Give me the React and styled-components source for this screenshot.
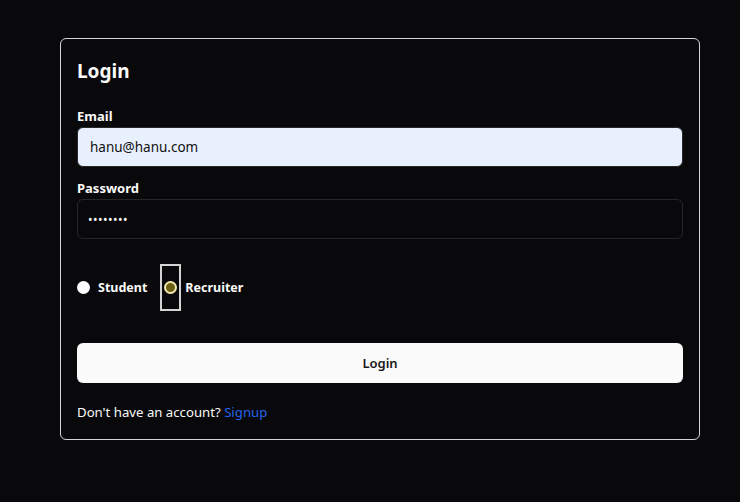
import React, { useState } from 'react';
import styled, { createGlobalStyle } from 'styled-components';

const GlobalStyle = createGlobalStyle`
  * { box-sizing: border-box; }
  html, body {
    margin: 0;
    background: #09090b;
    color: #fafafa;
    font-family: 'Noto Sans', 'Open Sans', sans-serif;
  }
`;

const Page = styled.div`
  min-height: 502px;
  padding: 38px 40px 0 60px;
`;

const Card = styled.form`
  width: 640px;
  border: 1px solid #d4d4d8;
  border-radius: 6px;
  padding: 16px 16px 0;
  display: flex;
  flex-direction: column;
  height: 402px;
`;

const Title = styled.h1`
  margin: 0;
  font-size: 19px;
  font-weight: 700;
  line-height: 32px;
`;

const Field = styled.div`
  display: flex;
  flex-direction: column;
  margin-top: ${(p) => p.$top}px;
`;

const Label = styled.label`
  font-size: 13px;
  font-weight: 700;
  line-height: 20px;
  margin-bottom: 1px;
`;

const Input = styled.input`
  height: 40px;
  width: 100%;
  border-radius: 6px;
  border: 1px solid #27272a;
  padding: 0 12px;
  font-family: inherit;
  font-size: 13.5px;
  outline: none;
  background: ${(p) => (p.$filled ? '#e8f0fe' : '#09090b')};
  color: ${(p) => (p.$filled ? '#111' : '#fafafa')};
  &[type='password'] {
    padding-left: 10px;
    font-size: 12px;
    letter-spacing: 0.5px;
  }
`;

const RadioRow = styled.div`
  display: flex;
  align-items: center;
  margin-top: 25px;
  height: 47px;
`;

const RadioOption = styled.label`
  display: flex;
  align-items: center;
  font-size: 12.5px;
  font-weight: 700;
  margin-right: ${(p) => (p.$focused ? '0' : '13px')};
`;

const FocusRing = styled.span`
  display: flex;
  align-items: center;
  justify-content: center;
  width: ${(p) => (p.$focused ? '21px' : '13px')};
  height: ${(p) => (p.$focused ? '47px' : '13px')};
  border: ${(p) => (p.$focused ? '2px solid #d4d4d4' : 'none')};
  margin-right: ${(p) => (p.$focused ? '4px' : '8px')};
`;

const Dot = styled.span`
  width: 13px;
  height: 13px;
  border-radius: 50%;
  background: ${(p) => (p.$checked ? '#6b5e12' : '#fff')};
  border: ${(p) => (p.$checked ? '2px solid #f5e9b0' : 'none')};
`;

const Button = styled.button`
  margin-top: 32px;
  height: 40px;
  width: 100%;
  border: none;
  border-radius: 6px;
  background: #fafafa;
  color: #18181b;
  font-family: inherit;
  font-size: 13px;
  font-weight: 600;
`;

const Footer = styled.p`
  margin: 19px 0 0;
  font-size: 13.2px;
  line-height: 20px;
`;

const SignupLink = styled.a`
  color: #2563eb;
  text-decoration: none;
`;

export default function App() {
  const [role, setRole] = useState('recruiter');

  return (
    <>
      <GlobalStyle />
      <Page>
        <Card onSubmit={(e) => e.preventDefault()}>
          <Title>Login</Title>
          <Field $top={19}>
            <Label>Email</Label>
            <Input $filled defaultValue="hanu@hanu.com" />
          </Field>
          <Field $top={11}>
            <Label>Password</Label>
            <Input type="password" defaultValue="hanuhanu" />
          </Field>
          <RadioRow>
            <RadioOption onClick={() => setRole('student')}>
              <FocusRing>
                <Dot $checked={role === 'student'} />
              </FocusRing>
              Student
            </RadioOption>
            <RadioOption $focused onClick={() => setRole('recruiter')}>
              <FocusRing $focused>
                <Dot $checked={role === 'recruiter'} />
              </FocusRing>
              Recruiter
            </RadioOption>
          </RadioRow>
          <Button type="submit">Login</Button>
          <Footer>
            Don't have an account? <SignupLink href="#">Signup</SignupLink>
          </Footer>
        </Card>
      </Page>
    </>
  );
}
